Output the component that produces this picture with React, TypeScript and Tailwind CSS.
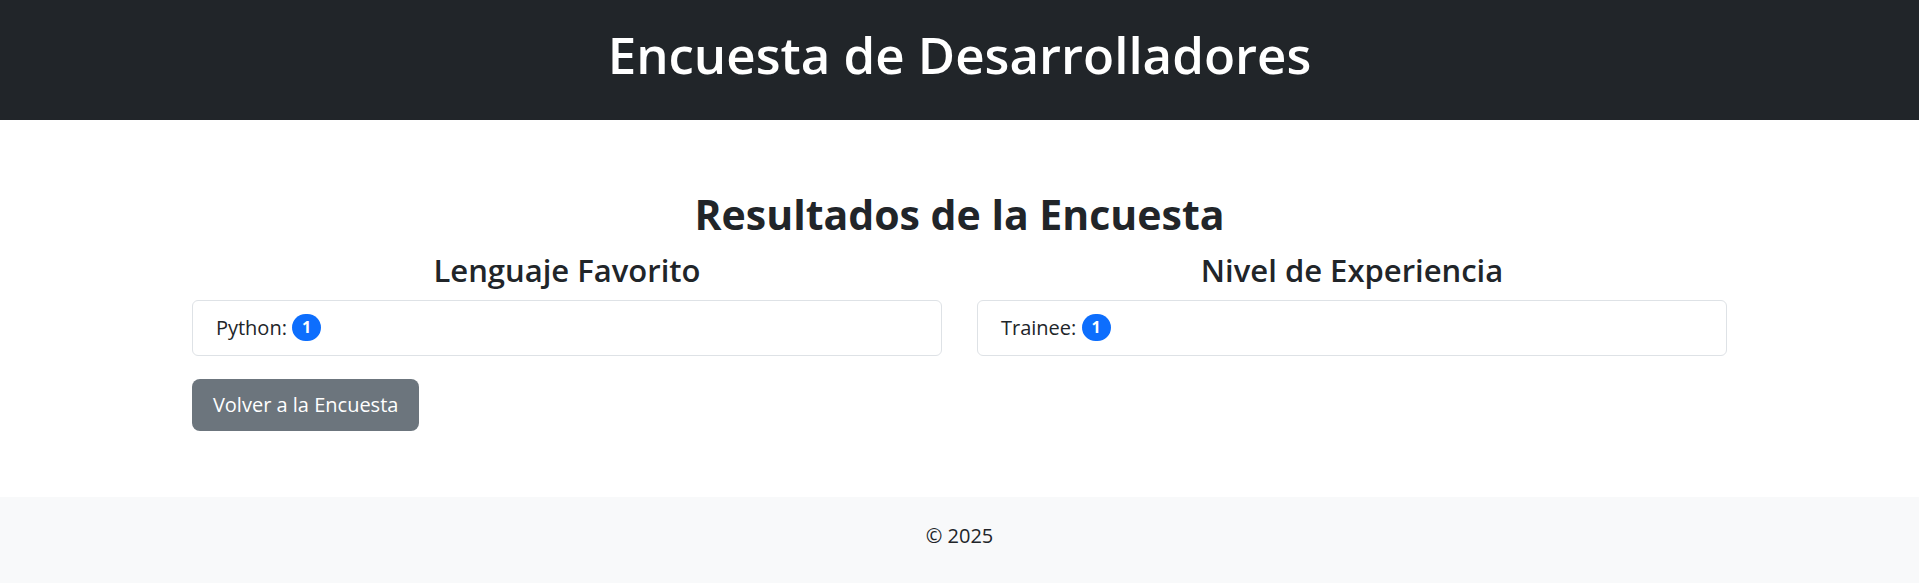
const App = () => {
  const font = "font-['Open_Sans','Noto_Sans',sans-serif]"

  return (
    <div className={`${font} min-h-screen flex flex-col bg-white text-[#212529]`}>
      <header className="bg-[#212529] h-[120px] pt-[24px] text-center text-white">
        <h1 className="text-[51px] leading-[1.2] font-semibold">Encuesta de Desarrolladores</h1>
      </header>

      <main className="w-[80%] mx-auto pt-[70px] pb-[66px]">
        <h1 className="text-[41px] leading-[1.2] font-bold text-center">Resultados de la Encuesta</h1>

        <div className="grid grid-cols-2 gap-x-[35px] mt-[12px]">
          <div>
            <h2 className="text-[31px] leading-[38px] font-semibold text-center">Lenguaje Favorito</h2>
            <div className="mt-[11px] border border-[#dee2e6] rounded-[6px] pl-[23px] pr-6 py-3 text-[20px] leading-[30px]">
              Python:{" "}
              <span className="inline-flex items-center justify-center h-[27px] min-w-[29px] px-[10px] rounded-full bg-[#0d6efd] text-white text-[16px] font-bold align-[2px] leading-none">
                1
              </span>
            </div>
          </div>
          <div>
            <h2 className="text-[31px] leading-[38px] font-semibold text-center">Nivel de Experiencia</h2>
            <div className="mt-[11px] border border-[#dee2e6] rounded-[6px] pl-[23px] pr-6 py-3 text-[20px] leading-[30px]">
              Trainee:{" "}
              <span className="inline-flex items-center justify-center h-[27px] min-w-[29px] px-[10px] rounded-full bg-[#0d6efd] text-white text-[16px] font-bold align-[2px] leading-none">
                1
              </span>
            </div>
          </div>
        </div>

        <button className="mt-[23px] h-[52px] px-[21px] rounded-[8px] bg-[#6c757d] text-white text-[20px] leading-[30px]">
          Volver a la Encuesta
        </button>
      </main>

      <footer className="flex-1 bg-[#f8f9fa] pt-6 pb-8 text-center text-[20px] leading-[30px]">
        © 2025
      </footer>
    </div>
  )
}

export default App
